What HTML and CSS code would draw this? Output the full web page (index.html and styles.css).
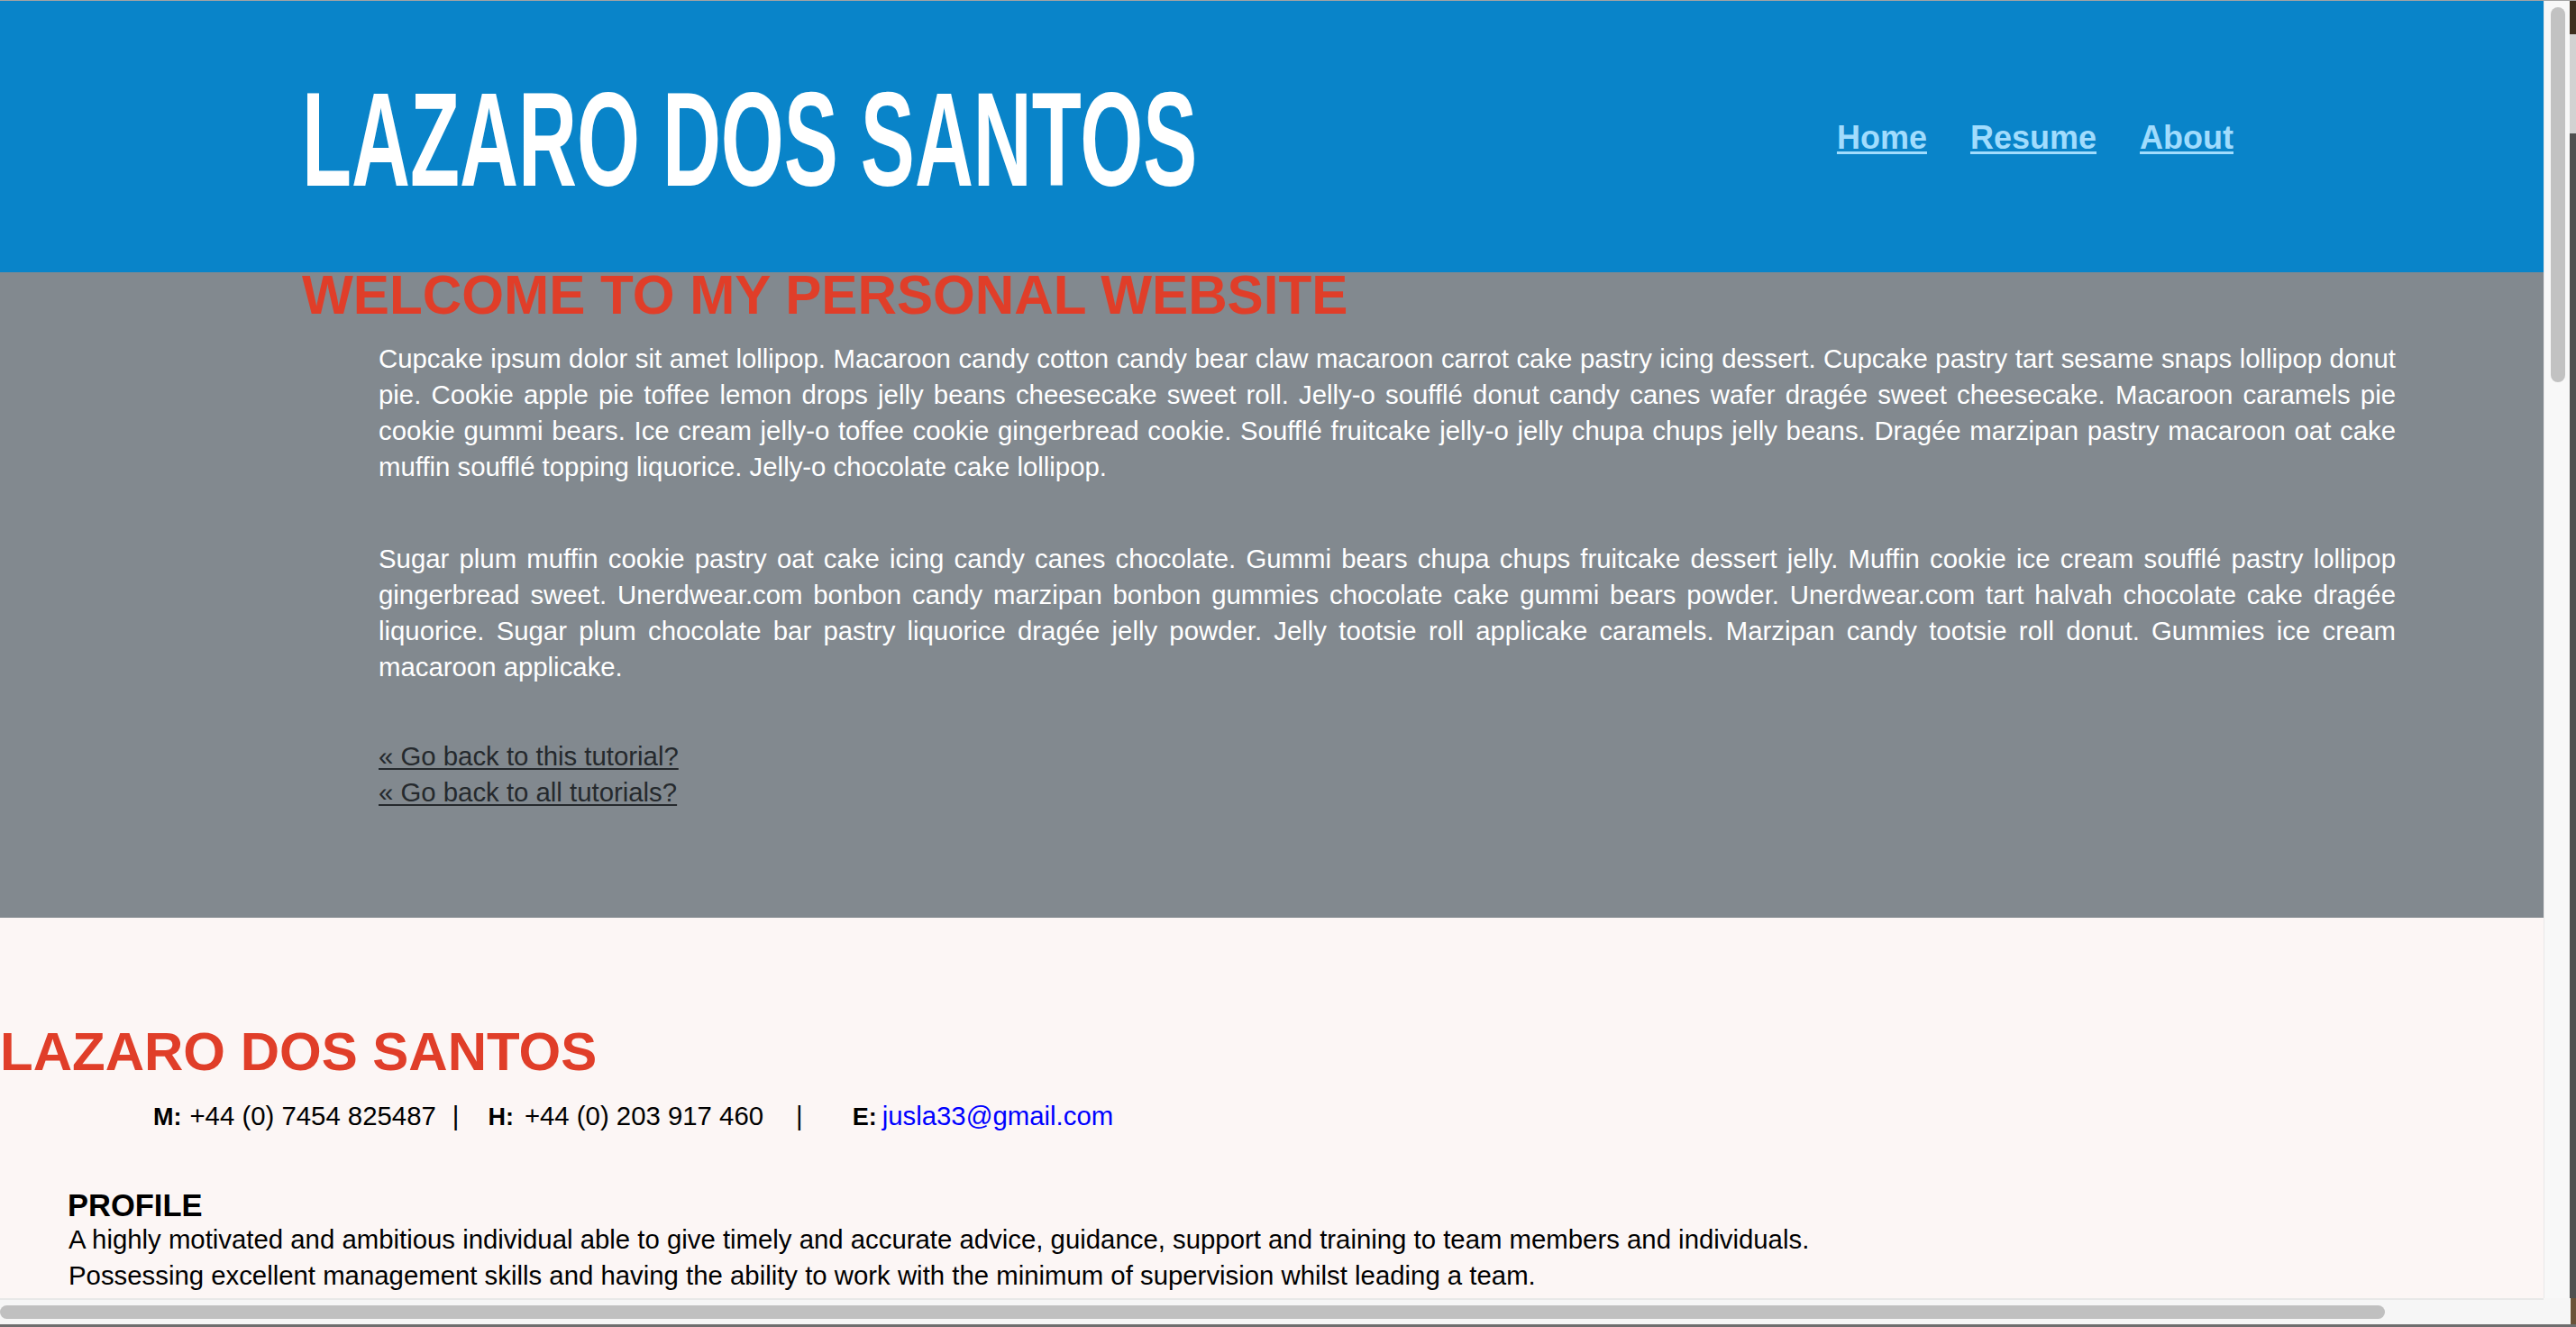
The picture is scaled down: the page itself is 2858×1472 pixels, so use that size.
FILE: index.html
```html
<!DOCTYPE html>
<html lang="en">
<head>
<meta charset="utf-8">
<title>Lazaro Dos Santos</title>
<link rel="stylesheet" href="styles.css">
</head>
<body>
<div class="screen">
  <div class="topline"></div>
  <div class="row-main">
    <div class="viewport">
      <header class="site-header">
        <h1 class="site-title">LAZARO DOS SANTOS</h1>
        <nav class="nav">
          <a href="#">Home</a>
          <a href="#">Resume</a>
          <a href="#">About</a>
        </nav>
      </header>
      <section class="intro">
        <h2 class="welcome">WELCOME TO MY PERSONAL WEBSITE</h2>
        <div class="intro-body">
          <p class="intro-text">Cupcake ipsum dolor sit amet lollipop. Macaroon candy cotton candy bear claw macaroon carrot cake pastry icing dessert. Cupcake pastry tart sesame snaps lollipop donut pie. Cookie apple pie toffee lemon drops jelly beans cheesecake sweet roll. Jelly-o soufflé donut candy canes wafer dragée sweet cheesecake. Macaroon caramels pie cookie gummi bears. Ice cream jelly-o toffee cookie gingerbread cookie. Soufflé fruitcake jelly-o jelly chupa chups jelly beans. Dragée marzipan pastry macaroon oat cake muffin soufflé topping liquorice. Jelly-o chocolate cake lollipop.</p>
          <p class="intro-text second">Sugar plum muffin cookie pastry oat cake icing candy canes chocolate. Gummi bears chupa chups fruitcake dessert jelly. Muffin cookie ice cream soufflé pastry lollipop gingerbread sweet. Unerdwear.com bonbon candy marzipan bonbon gummies chocolate cake gummi bears powder. Unerdwear.com tart halvah chocolate cake dragée liquorice. Sugar plum chocolate bar pastry liquorice dragée jelly powder. Jelly tootsie roll applicake caramels. Marzipan candy tootsie roll donut. Gummies ice cream macaroon applicake.</p>
          <p class="back-links"><a href="#">« Go back to this tutorial?</a><br><a href="#">« Go back to all tutorials?</a></p>
        </div>
      </section>
      <section class="resume">
        <h2 class="resume-name">LAZARO DOS SANTOS</h2>
        <p class="contact"><b class="lbl">M:</b><span class="val">+44 (0) 7454 825487</span><span class="sep sep-1">|</span><b class="lbl lbl-h">H:</b><span class="val val-h">+44 (0) 203 917 460</span><span class="sep sep-2">|</span><b class="lbl lbl-e">E:</b><a class="email" href="#">jusla33@gmail.com</a></p>
        <h3 class="profile-title">PROFILE</h3>
        <p class="profile-text">A highly motivated and ambitious individual able to give timely and accurate advice, guidance, support and training to team members and individuals.<br>Possessing excellent management skills and having the ability to work with the minimum of supervision whilst leading a team.</p>
      </section>
    </div>
    <div class="vscroll"><div class="vthumb"></div></div>
    <div class="desk desk-top"></div>
  </div>
  <div class="row-bottom">
    <div class="hscroll"><div class="hthumb"></div></div>
    <div class="corner"></div>
    <div class="desk desk-bottom"></div>
  </div>
  <div class="bottomline"></div>
</div>
</body>
</html>
```

FILE: styles.css
```css
html, body {
  margin: 0;
  padding: 0;
}
body {
  width: 2858px;
  height: 1472px;
  overflow: hidden;
  background: #4f4f4f;
  font-family: "Liberation Sans", Arial, sans-serif;
}
.screen {
  width: 2858px;
  height: 1472px;
  display: flex;
  flex-direction: column;
}
.topline {
  height: 1px;
  background: #a3a3a3;
  flex: none;
}
.row-main {
  height: 1439px;
  display: flex;
  flex: none;
}
.viewport {
  width: 2822px;
  height: 1439px;
  overflow: hidden;
  flex: none;
  background: #fcf6f5;
}
.vscroll {
  width: 29px;
  flex: none;
  background: #f8f8f8;
  border-left: 1px solid #e9e9e9;
  padding: 7px 0 0 7px;
  box-sizing: border-box;
}
.vthumb {
  width: 16px;
  height: 416px;
  border-radius: 8px;
  background: #c2c2c2;
}
.desk {
  flex: 1;
}
.desk-top {
  background: linear-gradient(#3e2f1f 0, #3e2f1f 37px, #d2d2d2 37px, #d2d2d2 147px, #4f4f4f 147px);
}
.desk-bottom {
  background: #6b5238;
}
.row-bottom {
  height: 29px;
  display: flex;
  flex: none;
}
.hscroll {
  width: 2822px;
  flex: none;
  background: #f6f6f6;
  border-top: 2px solid #e8e8e8;
  padding-top: 6px;
  box-sizing: border-box;
}
.hthumb {
  width: 2646px;
  height: 15px;
  border-radius: 8px;
  background: #c0c0c0;
}
.corner {
  width: 30px;
  flex: none;
  background: #f6f6f6;
}
.bottomline {
  height: 3px;
  flex: none;
  background: #6e6e6e;
}

/* ---------- page ---------- */
.site-header {
  height: 301px;
  box-sizing: border-box;
  background: #0984c9;
  display: flex;
  align-items: flex-start;
  padding: 80px 344px 0 335px;
}
.site-title {
  margin: 0;
  font-size: 148px;
  line-height: 148px;
  font-weight: 700;
  color: #ffffff;
  white-space: nowrap;
  transform: scaleX(0.608);
  transform-origin: left top;
}
.nav {
  margin-left: auto;
  margin-top: 51px;
  display: flex;
  gap: 48px;
}
.nav a {
  font-size: 36px;
  font-weight: 700;
  line-height: 41px;
  color: #a1dcfd;
  text-decoration: underline;
  text-decoration-thickness: 3px;
  text-underline-offset: 3px;
}

.intro {
  background: #82898f;
  padding: 0 164px 119px 335px;
}
.welcome {
  margin: 0;
  font-size: 60.2px;
  line-height: 52px;
  font-weight: 700;
  color: #e03e29;
  white-space: nowrap;
}
.intro-body {
  margin-left: 85px;
  padding-top: 24px;
}
.intro-body p {
  margin: 0;
  font-size: 29.35px;
  line-height: 40px;
}
.intro-text {
  color: #ffffff;
  text-align: justify;
}
.intro-text.second {
  margin-top: 62px;
}
.intro-body .back-links {
  margin-top: 59px;
}
.back-links a {
  color: #25292d;
  text-decoration: underline;
  text-decoration-thickness: 2px;
  text-underline-offset: 3px;
}

.resume {
  padding-top: 114px;
  color: #000000;
}
.resume-name {
  margin: 0;
  font-size: 60px;
  line-height: 70px;
  font-weight: 700;
  color: #e03e29;
}
.contact {
  margin: 16px 0 0 0;
  padding-left: 170px;
  font-size: 29.35px;
  line-height: 40px;
  white-space: nowrap;
}
.lbl {
  font-size: 27px;
  font-weight: 700;
}
.val {
  margin-left: 9px;
}
.sep {
  margin-left: 18px;
}
.lbl-h {
  margin-left: 32px;
}
.val-h {
  margin-left: 12px;
}
.sep-2 {
  margin-left: 36px;
}
.lbl-e {
  margin-left: 55px;
}
.email {
  margin-left: 6px;
  color: #0000ff;
  text-decoration: none;
}
.profile-title {
  margin: 60px 0 0 0;
  padding-left: 75px;
  font-size: 34.5px;
  line-height: 36px;
  font-weight: 700;
}
.profile-text {
  margin: 0;
  padding-left: 76px;
  font-size: 29.35px;
  line-height: 40px;
}
```
